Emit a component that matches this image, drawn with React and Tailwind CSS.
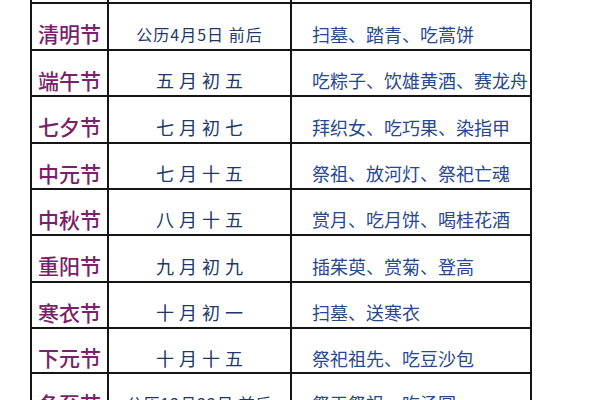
const rows = [
  { h: "h-[46px]", name: "寒食节", date: "", custom: "" },
  { h: "h-[47px]", name: "清明节", date: "公历4月5日 前后", dateSmall: true, custom: "扫墓、踏青、吃蒿饼" },
  { h: "h-[46px]", name: "端午节", date: "五月初五", custom: "吃粽子、饮雄黄酒、赛龙舟" },
  { h: "h-[47px]", name: "七夕节", date: "七月初七", custom: "拜织女、吃巧果、染指甲" },
  { h: "h-[46px]", name: "中元节", date: "七月十五", custom: "祭祖、放河灯、祭祀亡魂" },
  { h: "h-[46px]", name: "中秋节", date: "八月十五", custom: "赏月、吃月饼、喝桂花酒" },
  { h: "h-[47px]", name: "重阳节", date: "九月初九", custom: "插茱萸、赏菊、登高" },
  { h: "h-[46px]", name: "寒衣节", date: "十月初一", custom: "扫墓、送寒衣" },
  { h: "h-[45px]", name: "下元节", date: "十月十五", custom: "祭祀祖先、吃豆沙包" },
  { h: "h-[46px]", name: "冬至节", date: "公历12月22日 前后", dateSmall: true, custom: "祭天祭祖、吃汤圆" },
];

export default function App() {
  return (
    <div
      className="w-[600px] h-[400px] overflow-hidden bg-white"
      style={{ fontFamily: '"Noto Sans CJK SC", "Noto Sans", sans-serif' }}
    >
      <div className="ml-[30px] w-[502px] mt-[-42px] border-l-2 border-r-2 border-[#151515]">
        {rows.map((r, i) => (
          <div key={i} className={`flex ${r.h} border-b-2 border-[#151515]`}>
            <div className="w-[77px] shrink-0 border-r-2 border-[#151515] flex items-center justify-center pt-[14px]">
              <span className="text-[21px] leading-none font-medium text-[#7a1f68]">{r.name}</span>
            </div>
            <div className="w-[183px] shrink-0 border-r-2 border-[#151515] flex items-center justify-center pt-[14px]">
              {r.dateSmall ? (
                <span className="text-[16px] leading-none tracking-[1px] text-[#203868]">{r.date}</span>
              ) : (
                <span className="text-[18px] leading-none tracking-[5px] pl-[5px] text-[#203868]">{r.date}</span>
              )}
            </div>
            <div className="flex-1 flex items-center pl-[20px] pt-[14px]">
              <span className="text-[18px] leading-none text-[#274890]">{r.custom}</span>
            </div>
          </div>
        ))}
      </div>
    </div>
  );
}
